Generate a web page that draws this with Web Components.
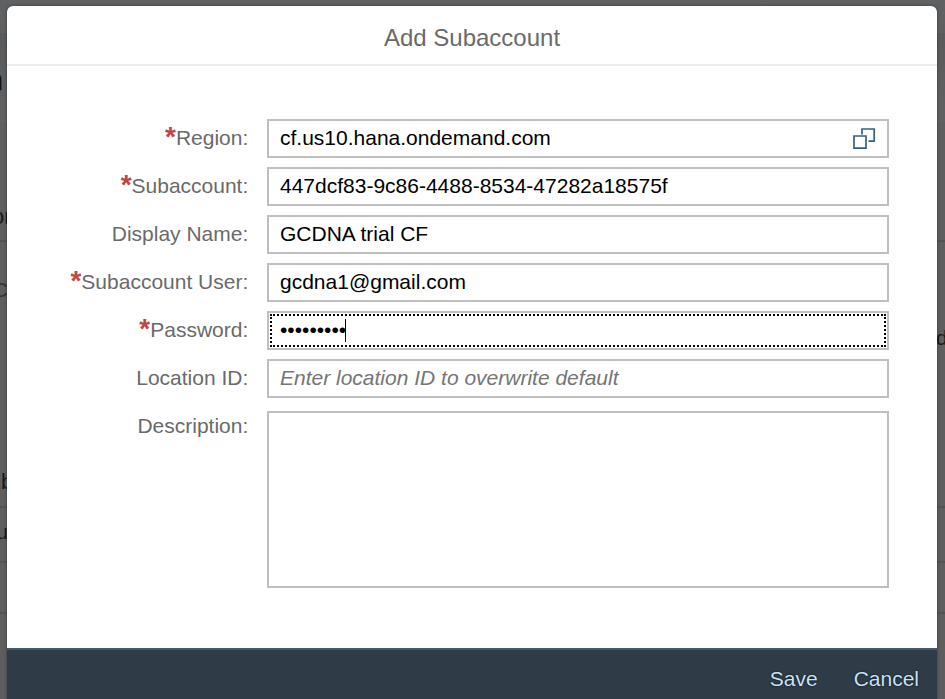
<!DOCTYPE html>
<html lang="en"><head><meta charset="utf-8"><title>Add Subaccount</title>
<style>
html,body{margin:0;height:100%;overflow:hidden}
body{font-family:"Liberation Sans",Arial,sans-serif;font-size:21px;color:#000;background:#5e5e5e}
</style></head><body>
<app-stage>
<sub-dialog heading="Add Subaccount">
<form-row label="Region" required><text-field help>cf.us10.hana.ondemand.com</text-field></form-row>
<form-row label="Subaccount" required><text-field>447dcf83-9c86-4488-8534-47282a18575f</text-field></form-row>
<form-row label="Display Name"><text-field>GCDNA trial CF</text-field></form-row>
<form-row label="Subaccount User" required><text-field>gcdna1@gmail.com</text-field></form-row>
<form-row label="Password" required><text-field focused>•••••••••</text-field></form-row>
<form-row label="Location ID"><text-field hint>Enter location ID to overwrite default</text-field></form-row>
<form-row label="Description" tall><text-field area></text-field></form-row>
<bar-button slot="actions">Save</bar-button>
<bar-button slot="actions">Cancel</bar-button>
</sub-dialog>
</app-stage>
<script>
const define=(name,html,setup)=>customElements.define(name,class extends HTMLElement{
 constructor(){super();this.attachShadow({mode:'open'}).innerHTML=html;}
 connectedCallback(){if(setup)setup(this,this.shadowRoot);}
});

define('app-stage',`<style>
:host{display:block;position:relative;box-sizing:border-box;width:945px;height:699px;padding:6px 8px 0 7px;overflow:hidden;
 background:linear-gradient(#606163 0,#5e5f61 35px,#5a5b5d 36px,#606163 121px,#5e5e5e 122px)}
i{position:absolute;left:0;width:100%;height:2px;background:#525252}
b{position:absolute;font-weight:400;line-height:24px;color:#191919;white-space:pre}
::slotted(*){position:relative}
</style>
<i style="top:34px;height:1px;background:#54585c"></i><i style="top:240px"></i><i style="top:506px"></i><i style="top:561px"></i><i style="top:612px"></i>
<b style="right:942px;top:68px;font-size:29px;color:#111;-webkit-text-stroke:.5px #111">n</b>
<b style="left:-8px;top:205px;font-size:22px">on</b>
<b style="right:937px;top:278px;color:#333">C</b>
<b style="left:1px;top:470px;font-size:22px">b</b>
<b style="right:937px;top:520px">u</b>
<b style="left:936px;top:326px">d</b>
<slot></slot>`);

define('sub-dialog',`<style>
:host{display:flex;flex-direction:column;box-sizing:border-box;width:930px;height:697px;background:#fff;border-radius:6px 6px 0 0;box-shadow:0 0 3px rgba(0,0,0,.45)}
header{box-sizing:border-box;height:60px;border-bottom:2px solid #ededed;display:flex;align-items:center;justify-content:center;font-size:24px;color:#6a6a6a;padding-top:6px;flex:none;border-radius:6px 6px 0 0}
main{flex:none;box-sizing:border-box;height:582px;padding:53px 48px 0 0;display:flex;flex-direction:column;gap:9px}
footer{flex:1;background:#2f3c48;border-top:2px solid #44596b;display:flex;justify-content:flex-end;gap:36px;padding:15px 18px 0 0;align-items:flex-start}
</style><header><span></span></header><main><slot></slot></main><footer><slot name="actions"></slot></footer>`,
(e,r)=>{r.querySelector('span').textContent=e.getAttribute('heading')});

define('form-row',`<style>
:host{display:grid;grid-template-columns:241.3px 622px;column-gap:18.7px;height:39px}
:host([tall]){height:177px;margin-top:4px}
label{color:#6a6a6a;text-align:right;line-height:24px;padding-top:7px;white-space:nowrap}
:host([tall]) label{padding-top:3px}
em{display:none;font:700 28px/0 "Liberation Sans",Arial,sans-serif;color:#c14646;position:relative;top:1px}
:host([required]) em{display:inline}
</style><label><em>*</em><span></span></label><slot></slot>`,
(e,r)=>{r.querySelector('span').textContent=e.getAttribute('label')+':'});

define('text-field',`<style>
:host{display:flex;box-sizing:border-box;border:2px solid #bfbfbf;background:#fff;padding:0 11px 0 11px;line-height:24px;position:relative;white-space:nowrap}
.v{padding-top:5px;flex:1}
svg{display:none;width:24px;height:24px;margin-top:6px}
:host([help]) svg{display:block}
:host([hint]) .v{font-style:italic;color:#757575}
.f,.c{display:none}
:host([focused]) .f{display:block;position:absolute;inset:1px;border:2px dotted #000}
:host([focused]) .c{display:inline-block;width:1px;height:23px;background:#000;vertical-align:-5px;margin-left:-1px}
</style><div class="v"><slot></slot><span class="c"></span></div>
<svg viewBox="0 0 24 24" fill="none" stroke="#346187" stroke-width="1.7"><path d="M2 9h12v12.2H2zM10 7.500V2h12.200v12.200H16.500"/></svg><div class="f"></div>`);

define('bar-button',`<style>:host{display:block;line-height:28px;color:#c7e2fa;text-shadow:0 0 2px #000}</style><slot></slot>`);
</script></body></html>
